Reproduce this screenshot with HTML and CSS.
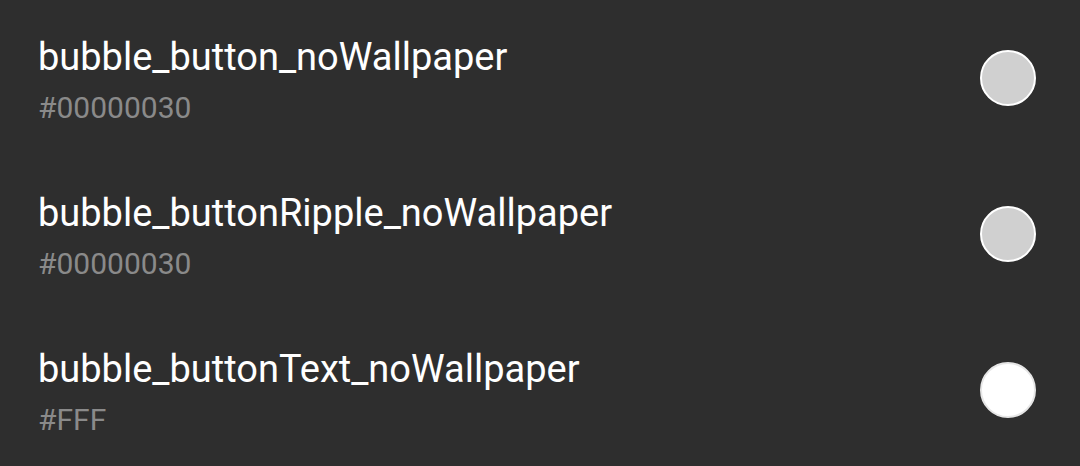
FILE: index.html
```html
<!DOCTYPE html>
<html lang="en">
<head>
    <meta charset="UTF-8">
    <meta name="viewport" content="width=device-width, initial-scale=1.0">
    <title>Theme colors</title>
    <link rel="stylesheet" href="styles.css">
</head>
<body>
    <div id="color-list">
        <div class="color-row">
            <div class="color-info">
                <div class="color-name">bubble_button_noWallpaper</div>
                <div class="color-value">#00000030</div>
            </div>
            <div class="swatch grey"></div>
        </div>
        <div class="color-row">
            <div class="color-info">
                <div class="color-name">bubble_buttonRipple_noWallpaper</div>
                <div class="color-value">#00000030</div>
            </div>
            <div class="swatch grey"></div>
        </div>
        <div class="color-row">
            <div class="color-info">
                <div class="color-name">bubble_buttonText_noWallpaper</div>
                <div class="color-value">#FFF</div>
            </div>
            <div class="swatch white"></div>
        </div>
    </div>
</body>
</html>
```

FILE: styles.css
```css
body {
    font-family: 'Roboto', sans-serif;
    background-color: #2e2e2e;
    margin: 0;
    padding: 0;
}

#color-list {
    display: flex;
    flex-direction: column;
}

.color-row {
    display: flex;
    align-items: center;
    justify-content: space-between;
    height: 156px;
    padding: 0 44px 0 38px;
}

.color-info {
    display: flex;
    flex-direction: column;
    gap: 9px;
    margin-top: 7px;
}

.color-name {
    color: #fff;
    font-size: 38px;
    line-height: 44px;
}

.color-value {
    color: #8a8a8a;
    font-size: 30px;
    line-height: 40px;
}

.swatch {
    width: 52px;
    height: 52px;
    border-radius: 50%;
    border: 2px solid #fff;
}

.swatch.grey {
    background-color: #d0d0d0;
}

.swatch.white {
    background-color: #fff;
    border-color: #e6e6e6;
}
```
